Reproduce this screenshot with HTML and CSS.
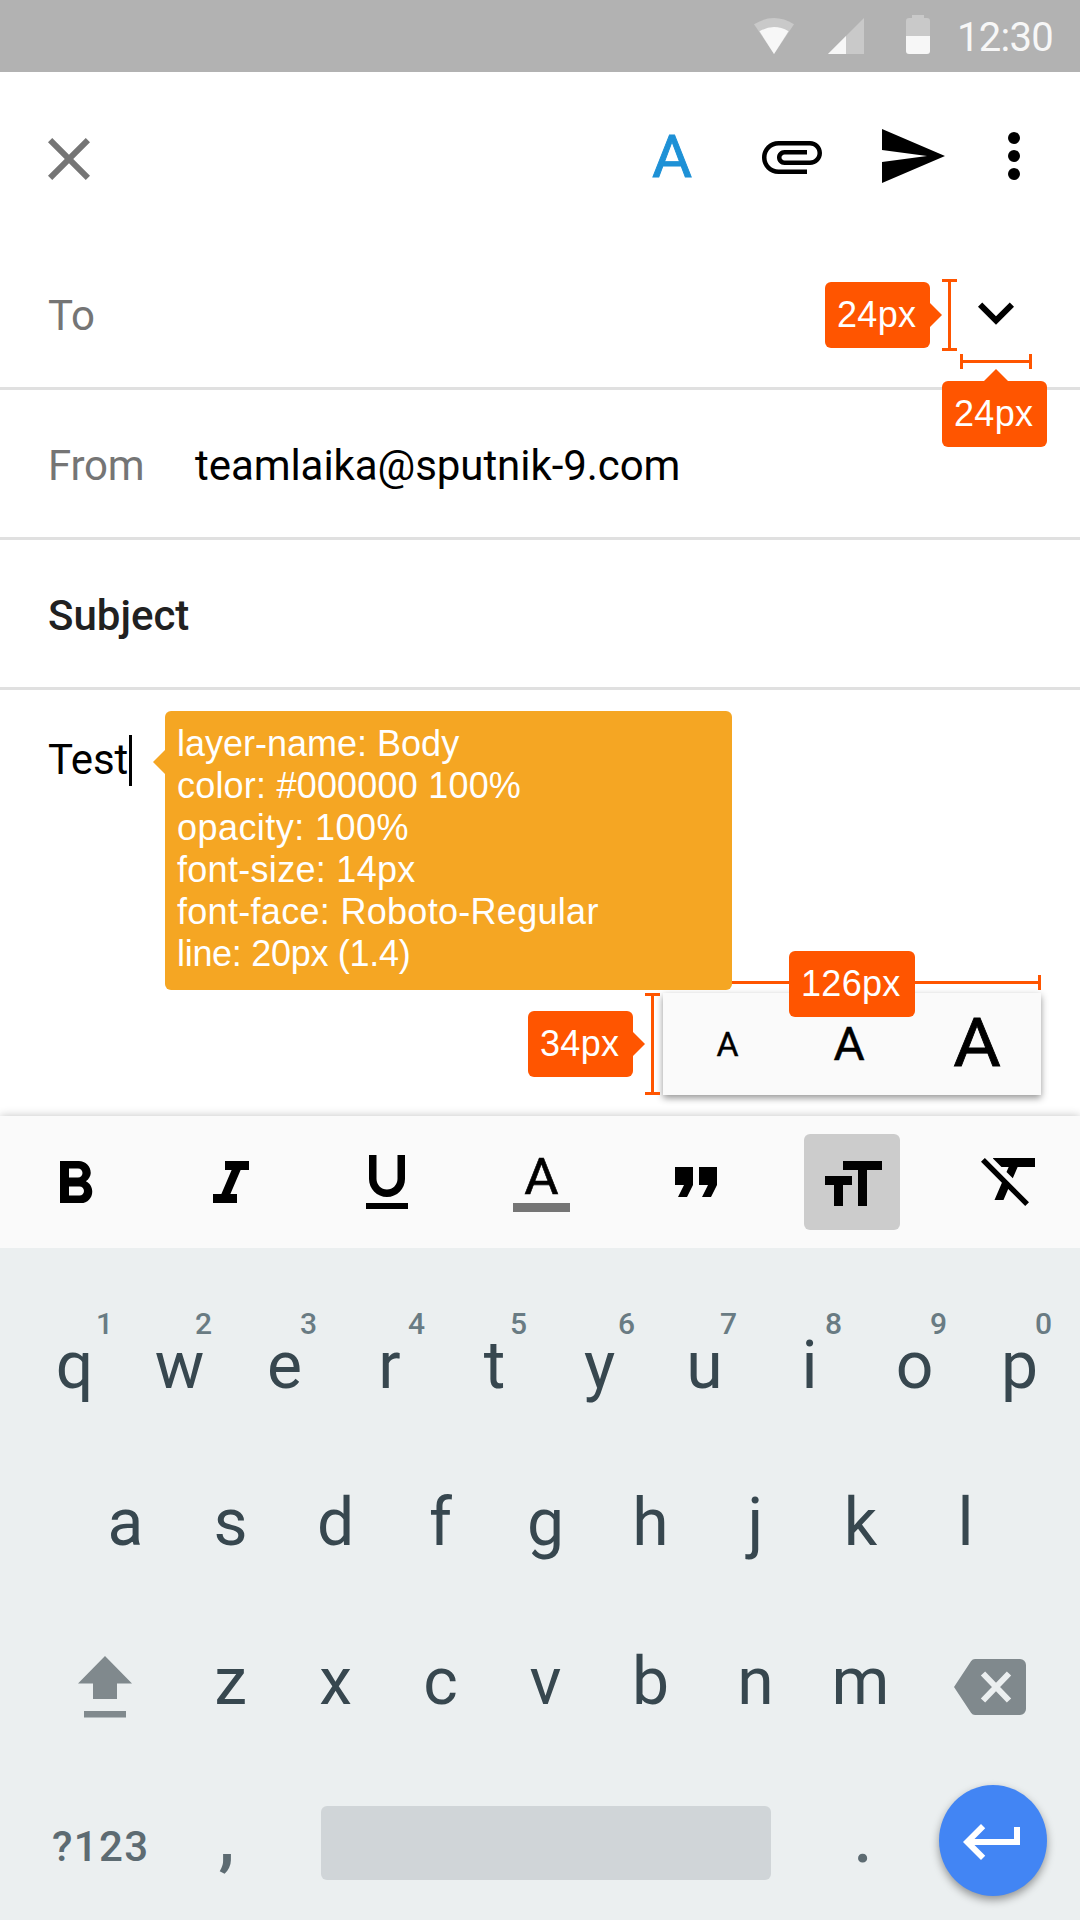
FILE: index.html
```html
<!DOCTYPE html>
<html lang="en">
<head>
<meta charset="utf-8">
<title>Compose</title>
<link rel="stylesheet" href="styles.css">
</head>
<body>
<div class="screen">
  <header class="status">
    <svg class="wifi" viewBox="0 0 40 36"><path fill="#c9c9c9" d="M0 6.200Q20 -6 40 6.200L20 36z"/><path fill="#f7f7f7" d="M5.500 13.200Q20 5 34.500 13.200L20 36z"/></svg>
    <svg class="signal" viewBox="0 0 36 36"><path fill="#c9c9c9" d="M0 36L36 0v36z"/><path fill="#f7f7f7" d="M0 36l18-18v18z"/></svg>
    <svg class="battery" viewBox="0 0 24 39"><path fill="#c9c9c9" d="M6 0h12v3h3a3 3 0 0 1 3 3v15H0V6a3 3 0 0 1 3-3h3z"/><path fill="#f7f7f7" d="M0 21h24v15a3 3 0 0 1-3 3H3a3 3 0 0 1-3-3z"/></svg>
    <span class="clock">12:30</span>
  </header>

  <nav class="appbar">
    <svg class="icon close" viewBox="0 0 24 24"><path d="M19 6.410L17.590 5 12 10.590 6.410 5 5 6.410 10.590 12 5 17.590 6.410 19 12 13.410 17.590 19 19 17.590 13.410 12z"/></svg>
    <span class="text-format">A</span>
    <svg class="icon attach" viewBox="0 0 24 24"><path d="M7.500 18C4.460 18 2 15.540 2 12.500S4.460 7 7.500 7H18c2.210 0 4 1.790 4 4s-1.790 4-4 4H9.500C8.120 15 7 13.880 7 12.500S8.120 10 9.500 10H17v1.500H9.500c-.55 0-1 .45-1 1s.45 1 1 1H18c1.380 0 2.500-1.120 2.500-2.500S19.380 8.500 18 8.500H7.500c-2.210 0-4 1.790-4 4s1.790 4 4 4H17V18z"/></svg>
    <svg class="icon send" viewBox="0 0 24 24"><path d="M2.010 21L23 12 2.010 3 2 10l15 2-15 2z"/></svg>
    <svg class="icon more" viewBox="0 0 24 24"><circle cx="12" cy="6" r="2"/><circle cx="12" cy="12" r="2"/><circle cx="12" cy="18" r="2"/></svg>
  </nav>

  <section class="field">
    <span class="label">To</span>
    <svg class="icon expand" viewBox="0 0 24 24"><path d="M7.410 7.840L12 12.420l4.590-4.580L18 9.250l-6 6-6-6z"/></svg>
  </section>
  <section class="field">
    <span class="label from">From</span>
    <span class="address">teamlaika@sputnik-9.com</span>
  </section>
  <section class="field"><span class="subject">Subject</span></section>

  <main class="message"><span class="typed">Test</span><i class="caret"></i></main>

  <section class="formatbar">
    <svg class="icon" viewBox="0 -1 24 24"><path d="M15.600 10.790c.97-.67 1.650-1.770 1.650-2.790 0-2.260-1.750-4-4-4H7v14h7.040c2.090 0 3.710-1.700 3.710-3.790 0-1.520-.86-2.820-2.150-3.420zM10 6.500h3c.83 0 1.500.67 1.500 1.500s-.67 1.500-1.500 1.500h-3zm3.500 9H10v-3h3.500c.83 0 1.500.67 1.500 1.500s-.67 1.500-1.500 1.500z"/></svg>
    <svg class="icon" viewBox="0 -1 24 24"><path d="M10 4v3h2.210l-3.420 8H6v3h8v-3h-2.210l3.420-8H18V4z"/></svg>
    <svg class="icon" viewBox="0 0 24 24"><path d="M12 17c3.310 0 6-2.690 6-6V3h-2.500v8c0 1.930-1.570 3.500-3.500 3.500S8.500 12.930 8.500 11V3H6v8c0 3.310 2.690 6 6 6zm-7 2v2h14v-2z"/></svg>
    <div class="text-color"><span>A</span></div>
    <svg class="icon" viewBox="0 0 24 24"><path d="M6 17h3l2-4V7H5v6h3zm8 0h3l2-4V7h-6v6h3z"/></svg>
    <div class="selected"><svg class="icon" viewBox="0 -1 24 24"><path d="M9 4v3h5v12h3V7h5V4zm-6 8h3v7h3v-7h3V9H3z"/></svg></div>
    <svg class="icon" viewBox="0 1 24 24"><path d="M3.270 5L2 6.270l6.970 6.970L6.500 19h3l1.570-3.660L16.730 21 18 19.730 3.550 5.270zM6 5v.18L8.820 8h2.400l-.72 1.680 2.100 2.100L14.210 8H20V5z"/></svg>
  </section>

  <section class="keyboard">
    <div class="row top">
      <span class="key">q<sup class="hint far">1</sup></span><span class="key">w<sup class="hint">2</sup></span><span class="key">e<sup class="hint">3</sup></span><span class="key">r<sup class="hint mid">4</sup></span><span class="key">t<sup class="hint">5</sup></span><span class="key">y<sup class="hint mid">6</sup></span><span class="key">u<sup class="hint">7</sup></span><span class="key">i<sup class="hint">8</sup></span><span class="key">o<sup class="hint">9</sup></span><span class="key">p<sup class="hint">0</sup></span>
    </div>
    <div class="row home">
      <span class="key">a</span><span class="key">s</span><span class="key">d</span><span class="key">f</span><span class="key">g</span><span class="key">h</span><span class="key">j</span><span class="key">k</span><span class="key">l</span>
    </div>
    <div class="row lower">
      <svg class="shift" viewBox="0 0 54 62"><path d="M27 0l27 27.500H39V43H15V27.500H0zM6 55h42v6.500H6z"/></svg>
      <span class="key">z</span><span class="key">x</span><span class="key">c</span><span class="key">v</span><span class="key">b</span><span class="key">n</span><span class="key">m</span>
      <svg class="backspace" viewBox="0 0 72 56"><path class="plate" d="M21 0H66a6 6 0 0 1 6 6V50a6 6 0 0 1-6 6H21q-2.500 0-4-2.300L0 28 17 2.300Q18.500 0 21 0z"/><path class="cross" d="M29 14.500L55 41.500M55 14.500L29 41.500"/></svg>
    </div>
    <div class="row bottom">
      <span class="mode">?123</span>
      <span class="punct comma">,</span>
      <span class="space"></span>
      <span class="punct period">.</span>
      <span class="enter"><svg class="icon" viewBox="0 0 24 24"><path d="M19 7v4H5.830l3.580-3.590L8 6l-6 6 6 6 1.410-1.410L5.830 13H21V7z"/></svg></span>
    </div>
  </section>

  <div class="sizes"><span class="small">A</span><span class="medium">A</span><span class="large">A</span></div>

  <i class="measure vertical m1"></i><span class="tag right t1">24px</span>
  <i class="measure horizontal m2"></i><span class="tag up t2">24px</span>
  <i class="measure horizontal m3"></i><span class="tag t3">126px</span>
  <i class="measure vertical m4"></i><span class="tag right t4">34px</span>

  <div class="spec">
    <div>layer-name: Body</div>
    <div class="l2">color: #000000 100%</div>
    <div class="l3">opacity: 100%</div>
    <div class="l4">font-size: 14px</div>
    <div class="l5">font-face: Roboto-Regular</div>
    <div class="l6">line: 20px (1.4)</div>
  </div>
</div>
</body>
</html>
```
FILE: styles.css
```css
* { box-sizing: border-box; }
body { margin: 0; background: #fff; font-family: Roboto, "Liberation Sans", sans-serif; }
.screen { position: relative; width: 1080px; height: 1920px; overflow: hidden; display: flex; flex-direction: column; background: #fff; font-size: 42px; color: #000; }
svg { display: block; flex: none; }
.icon { width: 72px; height: 72px; fill: #000; }

.status { height: 72px; background: #b2b2b2; display: flex; align-items: flex-start; padding-left: 754px; }
.wifi { width: 40px; height: 36px; margin-top: 18px; }
.signal { width: 36px; height: 36px; margin: 18px 0 0 34px; }
.battery { width: 24px; height: 39px; margin: 15px 0 0 42px; }
.clock { margin-left: 27px; font-size: 40px; letter-spacing: -.7px; line-height: 76px; color: #f7f7f7; }

.appbar { height: 168px; display: flex; align-items: flex-start; padding: 48px 30px 0 33px; }
.close { fill: #757575; margin-top: 3px; }
.text-format { width: 72px; margin-left: 531px; text-align: center; font-size: 59px; line-height: 74px; color: #1e91d6; -webkit-text-stroke: .9px #1e91d6; transform: scaleX(1.04); }
.attach { margin-left: 48px; }
.send { margin-left: 48px; }
.more { margin-left: 30px; }

.field { height: 150px; border-bottom: 3px solid #e0e0e0; padding: 0 48px; display: flex; align-items: flex-start; line-height: 152px; }
.label { color: #757575; }
.from { width: 147px; letter-spacing: -.2px; }
.address { letter-spacing: -.06px; }
.subject { font-weight: 500; color: #212121; }
.expand { margin: 39px 0 0 auto; }

.message { height: 426px; padding: 45px 48px; display: flex; line-height: 49px; }
.typed { width: 81px; letter-spacing: -.2px; }
.caret { width: 3px; height: 51px; background: #000; }

.formatbar { position: relative; height: 132px; background: #fafafa; box-shadow: 0 0 9px rgba(0,0,0,.24); display: grid; grid-template-columns: 156px 156px 154.5px 154.5px 156px 159px 72px; padding: 30px 0 0 39px; }
.text-color { width: 57px; height: 66px; margin-left: 7.5px; border-bottom: 9px solid #757575; text-align: center; font-size: 50.6px; line-height: 62px; }
.text-color span { display: block; transform: scaleX(1.04); -webkit-text-stroke: .6px #000; }
.selected { width: 96px; height: 96px; margin: -12px 0 0 -12px; padding: 12px; background: #ccc; border-radius: 6px; }

.keyboard { position: relative; height: 672px; padding-top: 39px; background: #ebeff0; color: #37474f; }
.row { display: flex; align-items: flex-start; }
.key { position: relative; width: 105px; text-align: center; font-size: 66px; line-height: 157px; }
.top { height: 157px; padding-left: 22px; }
.hint { position: absolute; left: 52.5px; top: 19px; width: 48px; font-size: 30px; font-weight: 500; line-height: 36px; color: #697b83; }
.hint.far { left: 58.5px; }
.hint.mid { left: 55.5px; }
.home { height: 157px; padding-left: 73px; }
.lower { height: 161px; }
.lower .key { line-height: 161px; }
.shift { width: 54px; height: 62px; margin: 55px 46px 0 78px; fill: #80898d; }
.backspace { width: 72px; height: 56px; margin: 58px 0 0 41px; }
.plate { fill: #80898d; }
.cross { fill: none; stroke: #ebeff0; stroke-width: 6; }
.bottom { height: 158px; }
.mode { width: 126px; margin-left: 52px; font-weight: 500; font-size: 42px; line-height: 169px; letter-spacing: 1.4px; color: #5d6b72; }
.punct { text-align: center; font-size: 66px; font-weight: 500; line-height: 155px; color: #5d6b72; }
.comma { width: 97px; font-weight: 700; }
.space { width: 450px; height: 74px; margin: 44px 0 0 46px; border-radius: 6px; background: #d0d5d8; }
.period { width: 92px; margin-left: 46px; }
.enter { width: 108px; height: 111px; margin: 23px 0 0 30px; border-radius: 50%; background: #4285f4; box-shadow: 0 4px 8px rgba(0,0,0,.38); padding: 21px 18px; }
.enter .icon { fill: #fff; }

.sizes { position: absolute; left: 663px; top: 993px; width: 378px; height: 102px; background: #fafafa; box-shadow: 0 3px 7px rgba(0,0,0,.42); line-height: 103px; }
.sizes span { position: absolute; top: 0; width: 80px; text-align: center; }
.small { left: 24.5px; font-size: 33.8px; -webkit-text-stroke: .4px #000; }
.medium { left: 146px; font-size: 46.4px; -webkit-text-stroke: .5px #000; transform: scaleX(1.03); }
.large { left: 273.5px; font-size: 67.5px; -webkit-text-stroke: .8px #000; transform: scaleX(1.08); line-height: 99px; }

.measure { position: absolute; }
.vertical { width: 15px; border-top: 3px solid #ff5500; border-bottom: 3px solid #ff5500; background: linear-gradient(#ff5500, #ff5500) 6px 0 / 3px 100% no-repeat; }
.horizontal { height: 15px; border-left: 3px solid #ff5500; border-right: 3px solid #ff5500; background: linear-gradient(#ff5500, #ff5500) 0 6px / 100% 3px no-repeat; }
.m1 { left: 942px; top: 279px; height: 72px; }
.m2 { left: 960px; top: 354px; width: 72px; }
.m3 { left: 663px; top: 975px; width: 378px; }
.m4 { left: 645px; top: 993px; height: 102px; }

.tag { position: absolute; width: 105px; height: 66px; padding-left: 12px; border-radius: 6px; background: #ff5500; color: #fff; font: 36px/66px "Liberation Sans", Arial, sans-serif; letter-spacing: .3px; }
.right::after { content: ""; position: absolute; left: 105px; top: 21px; border: 12px solid transparent; border-left-color: #ff5500; border-right: 0; }
.up::after { content: ""; position: absolute; left: 42px; top: -12px; border: 12px solid transparent; border-bottom-color: #ff5500; border-top: 0; }
.t1 { left: 825px; top: 282px; }
.t2 { left: 942px; top: 381px; }
.t3 { left: 789px; top: 951px; width: 126px; }
.t4 { left: 528px; top: 1011px; }

.spec { position: absolute; left: 165px; top: 711px; width: 567px; height: 279px; padding: 12px 12px 0; border-radius: 6px; background: #f5a623; color: #fff; font: 36px/42px "Liberation Sans", Arial, sans-serif; white-space: nowrap; }
.spec::before { content: ""; position: absolute; left: -12px; top: 39px; border: 12px solid transparent; border-right-color: #f5a623; border-left: 0; }
.l2 { letter-spacing: .2px; }
.l3 { letter-spacing: .45px; }
.l4 { letter-spacing: .3px; }
.l5 { letter-spacing: .3px; }
.l6 { letter-spacing: -.3px; }
```
